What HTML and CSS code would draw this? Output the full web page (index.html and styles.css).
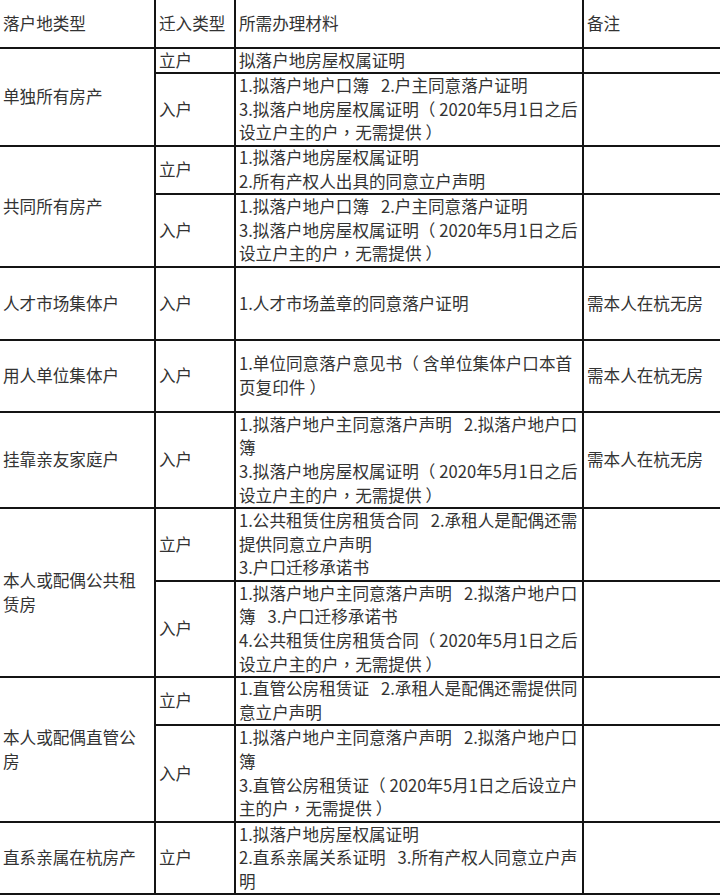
FILE: index.html
```html
<!DOCTYPE html>
<html lang="zh-CN">
<head>
<meta charset="utf-8">
<title>落户材料</title>
<link rel="stylesheet" href="styles.css">
</head>
<body>
<div class="grid">
  <div class="c"><div class="x">落户地类型</div></div>
  <div class="c"><div class="x">迁入类型</div></div>
  <div class="c"><div class="x">所需办理材料</div></div>
  <div class="c"><div class="x">备注</div></div>

  <div class="c s2"><div class="x">单独所有房产</div></div>
  <div class="c"><div class="x">立户</div></div>
  <div class="c"><div class="x">拟落户地房屋权属证明</div></div>
  <div class="c"></div>
  <div class="c"><div class="x">入户</div></div>
  <div class="c"><div class="x">1.拟落户地户口簿<span class="g"></span>2.户主同意落户证明<br>3.拟落户地房屋权属证明<span class="p" lang="zh-Hant">（</span><span class="t"></span>2020年5月1日之后<br>设立户主的户<span class="p" lang="zh-Hant">，</span>无需提供<span class="t"></span><span class="p" lang="zh-Hant">）</span></div></div>
  <div class="c"></div>

  <div class="c s2"><div class="x">共同所有房产</div></div>
  <div class="c"><div class="x">立户</div></div>
  <div class="c"><div class="x">1.拟落户地房屋权属证明<br>2.所有产权人出具的同意立户声明</div></div>
  <div class="c"></div>
  <div class="c"><div class="x">入户</div></div>
  <div class="c"><div class="x">1.拟落户地户口簿<span class="g"></span>2.户主同意落户证明<br>3.拟落户地房屋权属证明<span class="p" lang="zh-Hant">（</span><span class="t"></span>2020年5月1日之后<br>设立户主的户<span class="p" lang="zh-Hant">，</span>无需提供<span class="t"></span><span class="p" lang="zh-Hant">）</span></div></div>
  <div class="c"></div>

  <div class="c"><div class="x">人才市场集体户</div></div>
  <div class="c"><div class="x">入户</div></div>
  <div class="c"><div class="x">1.人才市场盖章的同意落户证明</div></div>
  <div class="c"><div class="x">需本人在杭无房</div></div>

  <div class="c"><div class="x">用人单位集体户</div></div>
  <div class="c"><div class="x">入户</div></div>
  <div class="c"><div class="x">1.单位同意落户意见书<span class="p" lang="zh-Hant">（</span><span class="t"></span>含单位集体户口本首<br>页复印件<span class="t"></span><span class="p" lang="zh-Hant">）</span></div></div>
  <div class="c"><div class="x">需本人在杭无房</div></div>

  <div class="c"><div class="x">挂靠亲友家庭户</div></div>
  <div class="c"><div class="x">入户</div></div>
  <div class="c"><div class="x">1.拟落户地户主同意落户声明<span class="g"></span>2.拟落户地户口<br>簿<br>3.拟落户地房屋权属证明<span class="p" lang="zh-Hant">（</span><span class="t"></span>2020年5月1日之后<br>设立户主的户<span class="p" lang="zh-Hant">，</span>无需提供<span class="t"></span><span class="p" lang="zh-Hant">）</span></div></div>
  <div class="c"><div class="x">需本人在杭无房</div></div>

  <div class="c s2"><div class="x">本人或配偶公共租<br>赁房</div></div>
  <div class="c"><div class="x">立户</div></div>
  <div class="c"><div class="x">1.公共租赁住房租赁合同<span class="g"></span>2.承租人是配偶还需<br>提供同意立户声明<br>3.户口迁移承诺书</div></div>
  <div class="c"></div>
  <div class="c"><div class="x">入户</div></div>
  <div class="c"><div class="x">1.拟落户地户主同意落户声明<span class="g"></span>2.拟落户地户口<br>簿<span class="g"></span>3.户口迁移承诺书<br>4.公共租赁住房租赁合同<span class="p" lang="zh-Hant">（</span><span class="t"></span>2020年5月1日之后<br>设立户主的户<span class="p" lang="zh-Hant">，</span>无需提供<span class="t"></span><span class="p" lang="zh-Hant">）</span></div></div>
  <div class="c"></div>

  <div class="c s2"><div class="x">本人或配偶直管公<br>房</div></div>
  <div class="c"><div class="x">立户</div></div>
  <div class="c"><div class="x">1.直管公房租赁证<span class="g"></span>2.承租人是配偶还需提供同<br>意立户声明</div></div>
  <div class="c"></div>
  <div class="c"><div class="x">入户</div></div>
  <div class="c"><div class="x">1.拟落户地户主同意落户声明<span class="g"></span>2.拟落户地户口<br>簿<br>3.直管公房租赁证<span class="p" lang="zh-Hant">（</span><span class="t"></span>2020年5月1日之后设立户<br>主的户<span class="p" lang="zh-Hant">，</span>无需提供<span class="t"></span><span class="p" lang="zh-Hant">）</span></div></div>
  <div class="c"></div>

  <div class="c"><div class="x">直系亲属在杭房产</div></div>
  <div class="c"><div class="x">立户</div></div>
  <div class="c"><div class="x">1.拟落户地房屋权属证明<br>2.直系亲属关系证明<span class="g"></span>3.所有产权人同意立户声<br>明</div></div>
  <div class="c"></div>
</div>
</body>
</html>
```

FILE: styles.css
```css
html, body {
  margin: 0;
  padding: 0;
  background: #ffffff;
}

body {
  width: 720px;
  height: 896px;
  overflow: hidden;
  font-family: "Noto Sans CJK SC", "Noto Sans", sans-serif;
  font-size: 16.6px;
  color: #333333;
}

.grid {
  display: grid;
  grid-template-columns: 154px 78px 346px 136px;
  grid-template-rows: 47px 23px 71px 46px 71px 71px 70px 94px 71px 94px 46px 95px 70px;
  gap: 2px;
  padding-bottom: 2px;
  background: #141414;
}

.c {
  background: #ffffff;
  display: flex;
  align-items: center;
  padding: 0 2px 0 3px;
  overflow: visible;
}

.x {
  line-height: 23.6px;
  white-space: nowrap;
}

.s2 {
  grid-row: span 2;
}

.g {
  display: inline-block;
  width: 12px;
}

.t {
  display: inline-block;
  width: 4px;
}

.p {
  font-family: "Noto Sans CJK TC", "Noto Sans CJK SC", sans-serif;
}
```
